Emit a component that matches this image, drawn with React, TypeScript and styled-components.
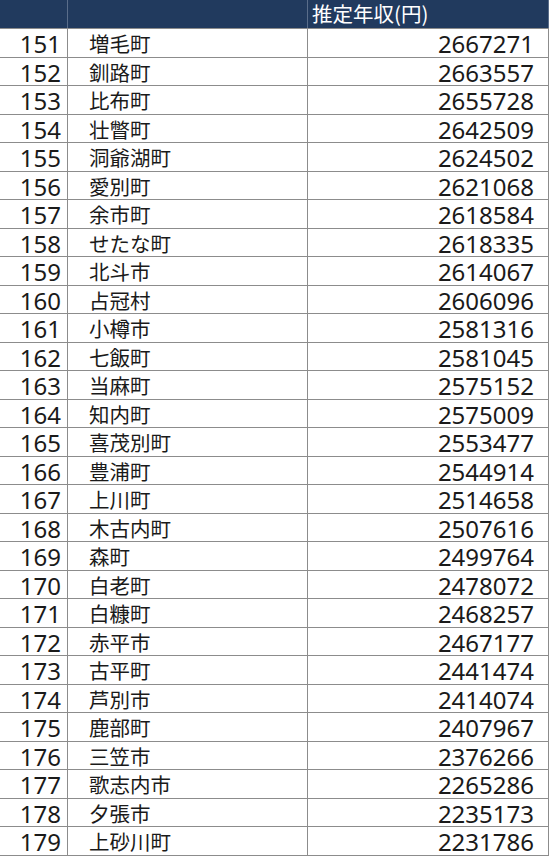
import styled, { createGlobalStyle } from "styled-components";

const GlobalStyle = createGlobalStyle`
  body {
    margin: 0;
    background: #ffffff;
    font-family: "Noto Sans", "Noto Sans CJK JP", sans-serif;
  }
`;

const rows: [number, string, number][] = [
  [151, "増毛町", 2667271],
  [152, "釧路町", 2663557],
  [153, "比布町", 2655728],
  [154, "壮瞥町", 2642509],
  [155, "洞爺湖町", 2624502],
  [156, "愛別町", 2621068],
  [157, "余市町", 2618584],
  [158, "せたな町", 2618335],
  [159, "北斗市", 2614067],
  [160, "占冠村", 2606096],
  [161, "小樽市", 2581316],
  [162, "七飯町", 2581045],
  [163, "当麻町", 2575152],
  [164, "知内町", 2575009],
  [165, "喜茂別町", 2553477],
  [166, "豊浦町", 2544914],
  [167, "上川町", 2514658],
  [168, "木古内町", 2507616],
  [169, "森町", 2499764],
  [170, "白老町", 2478072],
  [171, "白糠町", 2468257],
  [172, "赤平市", 2467177],
  [173, "古平町", 2441474],
  [174, "芦別市", 2414074],
  [175, "鹿部町", 2407967],
  [176, "三笠市", 2376266],
  [177, "歌志内市", 2265286],
  [178, "夕張市", 2235173],
  [179, "上砂川町", 2231786],
];

const Table = styled.div`
  width: 549px;
  display: flex;
  flex-direction: column;
`;

const Row = styled.div<{ $head?: boolean }>`
  display: grid;
  grid-template-columns: 68px 240px 241px;
  height: ${(p) => (p.$head ? "29px" : "28.5px")};
  box-sizing: border-box;
  border-bottom: 1px solid #8c8c8c;
  background: ${(p) => (p.$head ? "#213a5e" : "#ffffff")};
`;

const Cell = styled.div<{ $align: "left" | "right"; $head?: boolean; $pad: number }>`
  box-sizing: border-box;
  border-right: 1px solid ${(p) => (p.$head ? "#5a6d8a" : "#8c8c8c")};
  display: flex;
  align-items: center;
  justify-content: ${(p) => (p.$align === "right" ? "flex-end" : "flex-start")};
  padding: ${(p) => (p.$align === "right" ? `0 ${p.$pad}px 0 0` : `0 0 0 ${p.$pad}px`)};
  white-space: nowrap;
  min-height: 0;
`;

const Num = styled.span`
  font-family: "Noto Sans", sans-serif;
  font-size: 24px;
  color: #1a1a1a;
  line-height: 24px;
  margin-top: 3px;
  font-variant-numeric: tabular-nums;
`;

const Name = styled.span`
  font-family: "Noto Sans CJK JP", sans-serif;
  font-size: 20.5px;
  color: #1a1a1a;
  line-height: 21px;
  margin-top: 2px;
`;

const HeadText = styled.span`
  font-family: "Noto Sans CJK JP", sans-serif;
  font-size: 20.5px;
  color: #ffffff;
  line-height: 21px;
  margin-bottom: 1px;
`;

export default function App() {
  return (
    <>
      <GlobalStyle />
      <Table>
        <Row $head>
          <Cell $head $align="left" $pad={0} />
          <Cell $head $align="left" $pad={0} />
          <Cell $head $align="left" $pad={4}>
            <HeadText>推定年収(円)</HeadText>
          </Cell>
        </Row>
        {rows.map(([rank, name, income]) => (
          <Row key={rank}>
            <Cell $align="right" $pad={6}>
              <Num>{rank}</Num>
            </Cell>
            <Cell $align="left" $pad={21}>
              <Name>{name}</Name>
            </Cell>
            <Cell $align="right" $pad={14}>
              <Num>{income}</Num>
            </Cell>
          </Row>
        ))}
      </Table>
    </>
  );
}
